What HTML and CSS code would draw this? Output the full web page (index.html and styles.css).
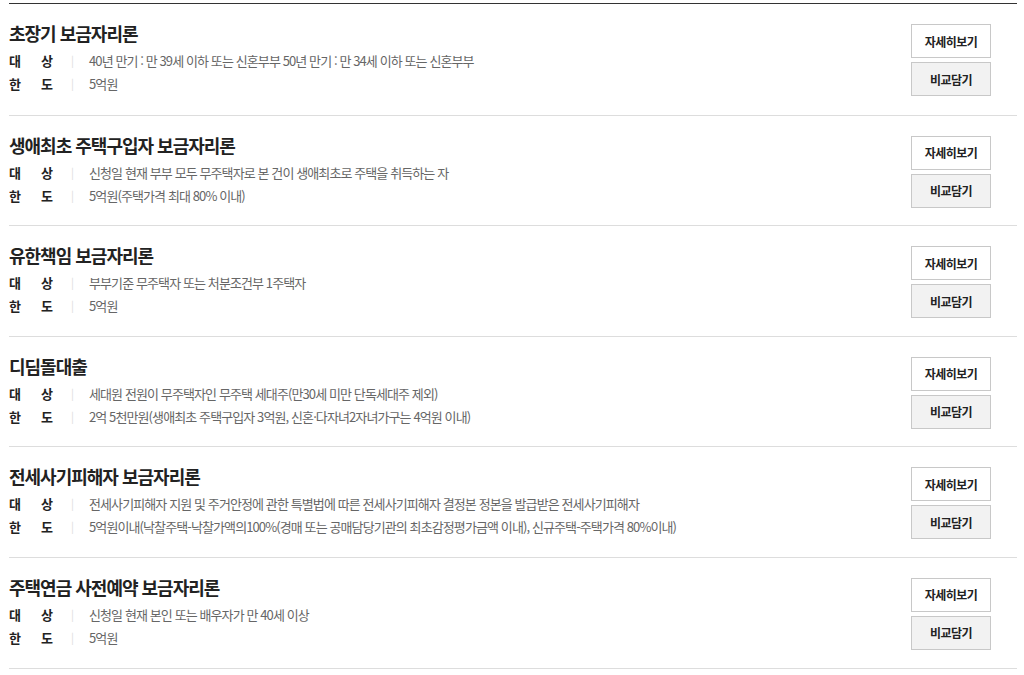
FILE: index.html
```html
<!DOCTYPE html>
<html lang="ko">
<head>
<meta charset="utf-8">
<title>보금자리론</title>
<link rel="stylesheet" href="styles.css">
</head>
<body>
<ul class="loan-list">
  <li class="loan">
    <div class="info">
      <h3 class="title">초장기 보금자리론</h3>
      <div class="row"><span class="label"><span>대</span><span>상</span></span><span class="bar">|</span><span class="val">40년 만기 : 만 39세 이하 또는 신혼부부 50년 만기 : 만 34세 이하 또는 신혼부부</span></div>
      <div class="row"><span class="label"><span>한</span><span>도</span></span><span class="bar">|</span><span class="val">5억원</span></div>
    </div>
    <div class="btns"><a class="btn">자세히보기</a><a class="btn gray">비교담기</a></div>
  </li>
  <li class="loan">
    <div class="info">
      <h3 class="title">생애최초 주택구입자 보금자리론</h3>
      <div class="row"><span class="label"><span>대</span><span>상</span></span><span class="bar">|</span><span class="val">신청일 현재 부부 모두 무주택자로 본 건이 생애최초로 주택을 취득하는 자</span></div>
      <div class="row"><span class="label"><span>한</span><span>도</span></span><span class="bar">|</span><span class="val">5억원(주택가격 최대 80% 이내)</span></div>
    </div>
    <div class="btns"><a class="btn">자세히보기</a><a class="btn gray">비교담기</a></div>
  </li>
  <li class="loan">
    <div class="info">
      <h3 class="title">유한책임 보금자리론</h3>
      <div class="row"><span class="label"><span>대</span><span>상</span></span><span class="bar">|</span><span class="val">부부기준 무주택자 또는 처분조건부 1주택자</span></div>
      <div class="row"><span class="label"><span>한</span><span>도</span></span><span class="bar">|</span><span class="val">5억원</span></div>
    </div>
    <div class="btns"><a class="btn">자세히보기</a><a class="btn gray">비교담기</a></div>
  </li>
  <li class="loan">
    <div class="info">
      <h3 class="title">디딤돌대출</h3>
      <div class="row"><span class="label"><span>대</span><span>상</span></span><span class="bar">|</span><span class="val">세대원 전원이 무주택자인 무주택 세대주(만30세 미만 단독세대주 제외)</span></div>
      <div class="row"><span class="label"><span>한</span><span>도</span></span><span class="bar">|</span><span class="val">2억 5천만원(생애최초 주택구입자 3억원, 신혼·다자녀2자녀가구는 4억원 이내)</span></div>
    </div>
    <div class="btns"><a class="btn">자세히보기</a><a class="btn gray">비교담기</a></div>
  </li>
  <li class="loan">
    <div class="info">
      <h3 class="title">전세사기피해자 보금자리론</h3>
      <div class="row"><span class="label"><span>대</span><span>상</span></span><span class="bar">|</span><span class="val">전세사기피해자 지원 및 주거안정에 관한 특별법에 따른 전세사기피해자 결정본 정본을 발급받은 전세사기피해자</span></div>
      <div class="row"><span class="label"><span>한</span><span>도</span></span><span class="bar">|</span><span class="val">5억원이내(낙찰주택-낙찰가액의100%(경매 또는 공매담당기관의 최초감정평가금액 이내), 신규주택-주택가격 80%이내)</span></div>
    </div>
    <div class="btns"><a class="btn">자세히보기</a><a class="btn gray">비교담기</a></div>
  </li>
  <li class="loan">
    <div class="info">
      <h3 class="title">주택연금 사전예약 보금자리론</h3>
      <div class="row"><span class="label"><span>대</span><span>상</span></span><span class="bar">|</span><span class="val">신청일 현재 본인 또는 배우자가 만 40세 이상</span></div>
      <div class="row"><span class="label"><span>한</span><span>도</span></span><span class="bar">|</span><span class="val">5억원</span></div>
    </div>
    <div class="btns"><a class="btn">자세히보기</a><a class="btn gray">비교담기</a></div>
  </li>
</ul>
</body>
</html>
```

FILE: styles.css
```css
* { box-sizing: border-box; }
html, body { margin: 0; padding: 0; background: #fff; }
body {
  font-family: "Noto Sans CJK KR", "Noto Sans", sans-serif;
  color: #222;
  padding: 3px 7px 0 9px;
}
.loan-list {
  list-style: none;
  margin: 0;
  padding: 0;
  border-top: 1px solid #333;
}
.loan {
  display: flex;
  justify-content: space-between;
  align-items: flex-start;
  padding: 20px 26px 18.6px 0;
  border-bottom: 1px solid #ddd;
}
.loan + .loan { padding-bottom: 17.6px; }
.title {
  margin: 0 0 7px;
  font-size: 18px;
  line-height: 18px;
  font-weight: bold;
  letter-spacing: -1px;
  color: #222;
}
.row {
  display: flex;
  font-size: 13px;
  line-height: 23px;
  letter-spacing: -0.9px;
}
.label {
  width: 44px;
  display: flex;
  justify-content: space-between;
  font-weight: bold;
  color: #222;
  letter-spacing: 0;
}
.bar {
  width: 36px;
  text-align: center;
  color: #ddd;
  font-size: 11px;
  padding-left: 2px;
}
.val { color: #666; }
.btns {
  display: flex;
  flex-direction: column;
  gap: 4px;
}
.btn {
  display: flex;
  align-items: center;
  justify-content: center;
  width: 80px;
  height: 34px;
  border: 1px solid #c8c8c8;
  background: #fff;
  font-size: 12px;
  font-weight: bold;
  color: #222;
  letter-spacing: -0.5px;
}
.btn.gray { background: #f2f2f2; }
```
